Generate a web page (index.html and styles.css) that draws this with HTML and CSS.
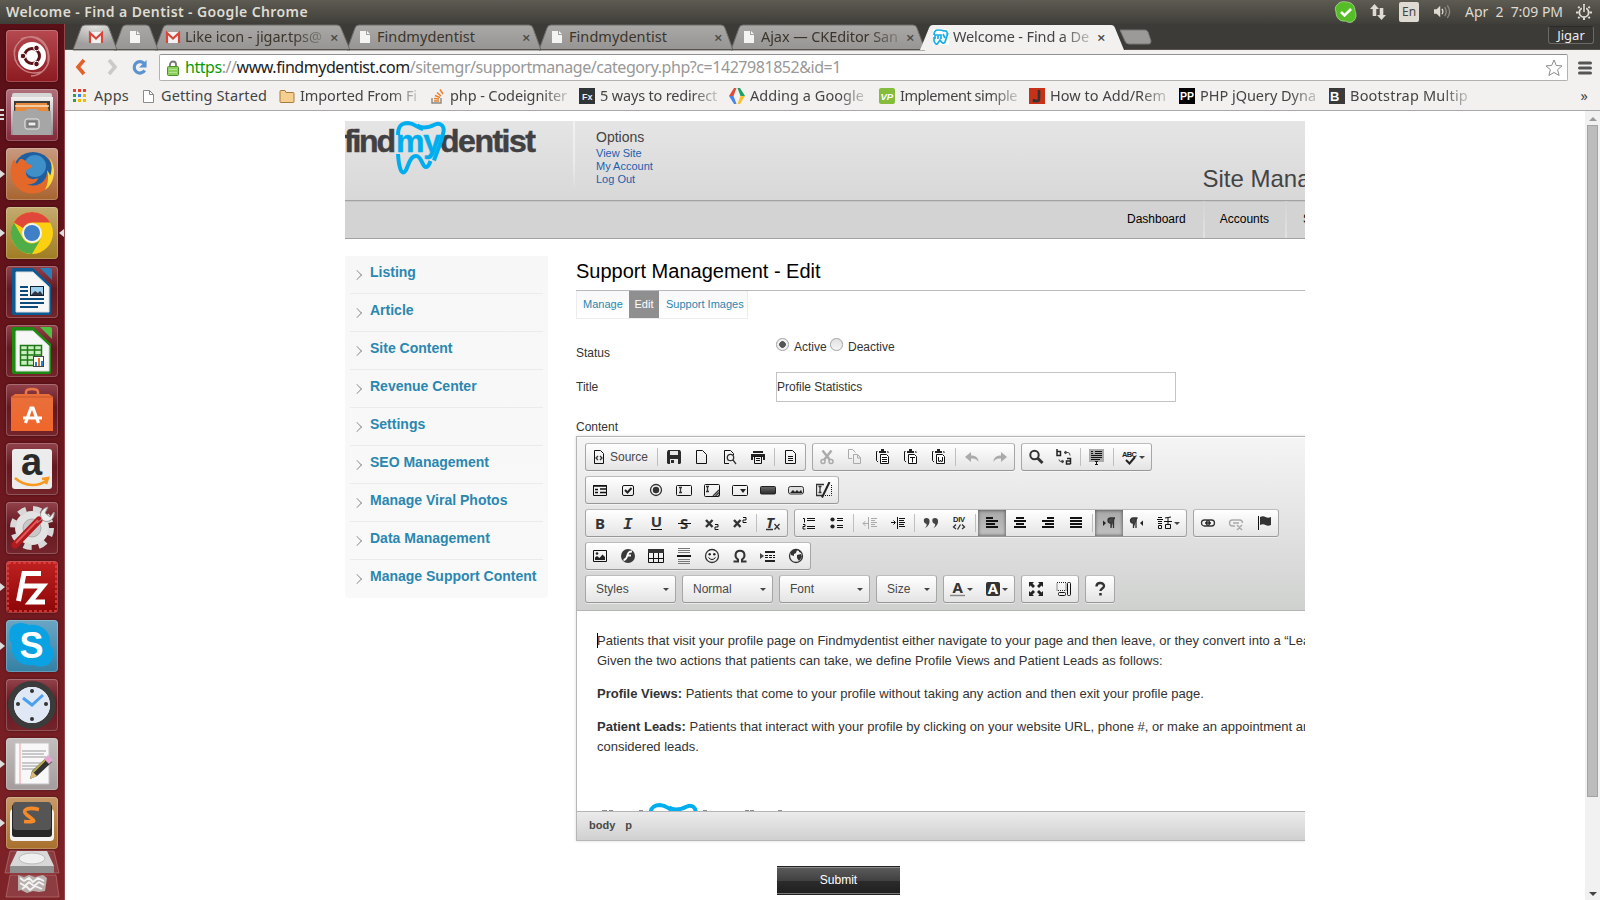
FILE: index.html
```html
<!DOCTYPE html>
<html lang="en">
<head>
<meta charset="utf-8">
<title>Welcome - Find a Dentist</title>
<link rel="stylesheet" href="styles.css">
</head>
<body>
<svg class="defs" aria-hidden="true">
<defs>
<linearGradient id="tabg" x1="0" y1="0" x2="0" y2="1"><stop offset="0" stop-color="#a9a8a6"/><stop offset="1" stop-color="#969593"/></linearGradient>
<radialGradient id="tabhot" cx=".5" cy="0" r=".8"><stop offset="0" stop-color="#e4e4e2"/><stop offset="1" stop-color="#a09f9d"/></radialGradient>
<linearGradient id="drk" x1="0" y1="0" x2="0" y2="1"><stop offset="0" stop-color="#6a6a6a"/><stop offset="1" stop-color="#2a2a2a"/></linearGradient>
<linearGradient id="bag" x1="0" y1="0" x2="0" y2="1"><stop offset="0" stop-color="#e8703c"/><stop offset="1" stop-color="#f0662a"/></linearGradient>
<linearGradient id="silver" x1="0" y1="0" x2="0" y2="1"><stop offset="0" stop-color="#f0f0f0"/><stop offset="1" stop-color="#8f8f8f"/></linearGradient>
</defs>
</svg>
<svg class="symbols" aria-hidden="true">
<symbol id="page" viewBox="0 0 16 16"><path d="M3.500 2.500h6l4 4v8h-10z" fill="#fff" stroke="#8a8a8a"/><path d="M9.500 2.500v4h4" fill="none" stroke="#8a8a8a"/></symbol>
<symbol id="tabpage" viewBox="0 0 16 16"><path d="M3 2h6v4h4v8H3z" fill="#f4f4f3"/><path d="M10 2l3 3h-3z" fill="#f4f4f3"/></symbol>
<symbol id="gmail" viewBox="0 0 16 16"><path d="M1 3h14v11H1z" fill="#f2f2f2"/><path d="M2 14V4l6 5.500L14 4v10" fill="none" stroke="#d8453a" stroke-width="2.200"/></symbol>
<symbol id="i-source" viewBox="0 0 16 16"><path d="M3.500 1.500h6l3 3v10h-9z" class="k"/><path d="M7 7L5 9l2 2M9 7l2 2-2 2" class="k k2"/></symbol>
<symbol id="i-save" viewBox="0 0 16 16"><path d="M1 3l1-2h12l1 2v11l-1 1H2l-1-1z" fill="#2b2b2b"/><path d="M4 2h8v4H4zM4 10h8v5H4z" fill="#e8e8e8"/><path d="M5 11h3v3H5z" fill="#2b2b2b"/></symbol>
<symbol id="i-new" viewBox="0 0 16 16"><path d="M2.500 1.500h6l4 4v9h-10z" class="k"/></symbol>
<symbol id="i-preview" viewBox="0 0 16 16"><path d="M11.500 6V4.500l-3-3h-6v13H7" class="k"/><circle cx="8.500" cy="8.500" r="3.200" class="k k2"/><path d="M11 11l3 4" class="k k2"/></symbol>
<symbol id="i-print" viewBox="0 0 16 16"><path d="M3 2h10v2H3zM1 5h14v6h-2V8H3v3H1z" fill="#222"/><path d="M4.500 7.500h7v7h-7z" class="k"/><path d="M6 9.500h4M6 11.500h4" class="k"/></symbol>
<symbol id="i-templates" viewBox="0 0 16 16"><path d="M2.500 1.500h7l3 3v10h-10zM5 7.500h5M5 9.500h5M5 11.500h5" class="k"/></symbol>
<symbol id="i-cut" viewBox="0 0 16 16"><path d="M3.500 1.500L11 11M12.500 1.500L5 11" stroke="#aaa" stroke-width="2.400"/><circle cx="4" cy="12.500" r="2" fill="none" stroke="#aaa" stroke-width="1.500"/><circle cx="12" cy="12.500" r="2" fill="none" stroke="#aaa" stroke-width="1.500"/></symbol>
<symbol id="i-copy" viewBox="0 0 16 16"><path d="M5 9.500H1.500v-9h4l3 3M6.500 5.500h4l3 3v6h-7zM10.500 6v3h3" fill="none" stroke="#aaa"/></symbol>
<symbol id="i-clip" viewBox="0 0 16 16"><path d="M2.500 2.500h-1v9l1.500 1.500M12.500 2.500h.5V4" class="k"/><path d="M4 2h2V0h3v2h2v2H4z" fill="#222"/><path d="M5.500 5.500h6l2 2v7h-8z" fill="#fff" stroke="#111"/></symbol>
<symbol id="i-paste" viewBox="0 0 16 16"><use href="#i-clip"/><path d="M7 8.500h5M7 10.500h5M7 12.500h5" class="k"/></symbol>
<symbol id="i-pastet" viewBox="0 0 16 16"><use href="#i-clip"/><path d="M7 8.500h5M9.500 8.500v5" class="k"/></symbol>
<symbol id="i-pastew" viewBox="0 0 16 16"><use href="#i-clip"/><path d="M7.500 8v4l1 1 1-2 1 2 1-1V8" class="k"/></symbol>
<symbol id="i-undo" viewBox="0 0 16 16"><path d="M7 3L1 8l6 5v-3.500c4-.5 6 1 7.500 3.500C14.500 9 12 6.500 7 6.500z" fill="#aaa"/></symbol>
<symbol id="i-find" viewBox="0 0 16 16"><circle cx="6.500" cy="6" r="4.200" fill="none" stroke="#333" stroke-width="2"/><path d="M9.500 9l5 5" stroke="#333" stroke-width="3"/></symbol>
<symbol id="i-replace" viewBox="0 0 16 16"><path d="M1 0v6.500h3.500v-4H1M11 9.500h3.500V15M14.500 12h-4v3h4" fill="none" stroke="#222" stroke-width="1.500"/><path d="M8 3.500h4q2 0 2 3M8 3.500l2-1.500v3zM8 12.500H5q-2 0-2-2M8 12.500L6 11v3z" stroke="#444" fill="none"/></symbol>
<symbol id="i-selall" viewBox="0 0 16 16"><path d="M0 0h15v13H0z" fill="#aaa"/><path d="M2 2.500h2M6 2.500h7M2 4.500h2M6 4.500h7M2 6.500h11M2 8.500h11M2 10.500h9" stroke="#111"/><path d="M6 12.500h3M7.500 12.500v3.500M6 15.500h3" class="k"/></symbol>
<symbol id="i-form" viewBox="0 0 16 16"><path d="M1.500 3.500h13v10h-13z" class="k"/><path d="M1 4h14M3 7.500h3M8 7h6M3 10.500h3M8 10.500h6" stroke="#111" stroke-width="1.600"/></symbol>
<symbol id="i-check" viewBox="0 0 16 16"><rect x="2.500" y="3.500" width="11" height="10" rx="1.500" class="k"/><path d="M5 8l2.500 2.500L11.500 6" fill="none" stroke="#222" stroke-width="2"/></symbol>
<symbol id="i-radio" viewBox="0 0 16 16"><circle cx="8" cy="8" r="5.500" class="k k2"/><circle cx="8" cy="8" r="3.200" fill="#333"/></symbol>
<symbol id="i-field" viewBox="0 0 16 16"><rect x=".5" y="3.500" width="15" height="10" rx="1" class="k"/><path d="M3 5.500h3M4.500 5.500v5M3 10.500h3" class="k k2"/></symbol>
<symbol id="i-area" viewBox="0 0 16 16"><rect x=".5" y="2.500" width="15" height="12" rx="1" class="k"/><path d="M2 4.500h3M3.500 4.500v5M2 9.500h3M9 14l6-6M11.500 14l3.500-3.500M14 14l1-1" class="k k2"/></symbol>
<symbol id="i-select" viewBox="0 0 16 16"><rect x=".5" y="3.500" width="15" height="10" rx="1" class="k"/><path d="M8 7h6l-3 4z" fill="#222"/></symbol>
<symbol id="i-button" viewBox="0 0 16 16"><rect x=".5" y="4.500" width="15" height="7.500" rx="1" fill="url(#drk)" stroke="#222"/></symbol>
<symbol id="i-imgbtn" viewBox="0 0 16 16"><rect x=".5" y="4.500" width="15" height="7.500" rx="2" fill="#ddd" stroke="#333"/><path d="M2 11l3-3 2 2 2-2 2 2 2-2 1.500 3z" fill="#222"/></symbol>
<symbol id="i-hidden" viewBox="0 0 16 16"><path d="M8 2.500H.5v11H6M2.500 4.500h3M4 4.500v6M2.500 10.500h3" class="k k2"/><path d="M15.500 3v10.500H9" fill="none" stroke="#111" stroke-dasharray="1 1"/><path d="M13.500 0L6 15.500" stroke="#222" stroke-width="2"/></symbol>
<symbol id="i-sub" viewBox="0 0 16 16"><path d="M2 5l6.500 7M8.500 5L2 12" stroke="#333" stroke-width="2.400"/><path d="M11 9.500h3v2.500h-3v2.500h3.500" class="k"/></symbol>
<symbol id="i-sup" viewBox="0 0 16 16"><path d="M2 5l6.500 7M8.500 5L2 12" stroke="#333" stroke-width="2.400"/><path d="M11 2.500h3V5h-3v2.500h3.500" class="k"/></symbol>
<symbol id="i-ol" viewBox="0 0 16 16"><path d="M2 3.500h1.500v4M2 9.500h2v2H2v2.500h2.500M6 3.500h8M6 5.500h8M6 11.500h8M6 13.500h8" class="k"/></symbol>
<symbol id="i-ul" viewBox="0 0 16 16"><circle cx="3.500" cy="4.500" r="2.100" fill="#222"/><circle cx="3.500" cy="11.500" r="2.100" fill="#222"/><path d="M8 3.500h6M8 5.500h6M8 10.500h6M8 12.500h6" class="k"/></symbol>
<symbol id="i-out" viewBox="0 0 16 16"><path d="M6.500 2v12M9 3.500h6M9 5.500h4M9 7.500h6M9 9.500h4M9 11.500h6M1 8.500h5M3.500 6L1 8.500 3.500 11" fill="none" stroke="#aaa"/></symbol>
<symbol id="i-in" viewBox="0 0 16 16"><path d="M7.500 2v12M9 3.500h6M9 5.500h5M9 7.500h6M9 9.500h5M9 11.500h6M1 7.500h4M3.500 5.500l2 2-2 2" class="k"/></symbol>
<symbol id="i-quote" viewBox="0 0 16 16"><path d="M1 4q2.500-2 5 0c1.500 3 0 7-4 9 1.500-2 2-3 1.500-4Q0 8 1 4zM9.500 4q2.500-2 5 0c1.500 3 0 7-4 9 1.500-2 2-3 1.500-4Q8.500 8 9.500 4z" fill="#444"/></symbol>
<symbol id="i-left" viewBox="0 0 16 16"><path d="M2 3h7M2 6h12M2 9h9M2 12h12" stroke="#111" stroke-width="2"/></symbol>
<symbol id="i-center" viewBox="0 0 16 16"><path d="M4 3h8M2 6h12M4 9h8M2 12h12" stroke="#111" stroke-width="2"/></symbol>
<symbol id="i-right" viewBox="0 0 16 16"><path d="M7 3h7M2 6h12M5 9h9M2 12h12" stroke="#111" stroke-width="2"/></symbol>
<symbol id="i-just" viewBox="0 0 16 16"><path d="M2 3h12M2 6h12M2 9h12M2 12h12" stroke="#111" stroke-width="2"/></symbol>
<symbol id="i-ltr" viewBox="0 0 16 16"><path d="M2 5.500L5 8l-3 3z" fill="#222"/><path d="M14 3H9.500a2.500 2.500 0 0 0 0 5H10v5M12.500 3v10" fill="#444" stroke="#333" stroke-width="1.300"/></symbol>
<symbol id="i-rtl" viewBox="0 0 16 16"><path d="M14 5.500L11 8l3 3z" fill="#222"/><path d="M8.500 3H4a2.500 2.500 0 0 0 0 5h.5v5M7 3v10" fill="#444" stroke="#333" stroke-width="1.300"/></symbol>
<symbol id="i-lang" viewBox="0 0 16 16"><path d="M0 4.500h6M1 2.500h4M1 6.500h4M1 8.500h4M1.500 10.500h3v3h-3zM8 3l6-1M7 6.500h8M11 3v6M8.500 9.500h5v4h-5z" class="k"/></symbol>
<symbol id="i-link" viewBox="0 0 16 16"><rect x="1.500" y="5" width="8" height="6" rx="3" class="k k2"/><rect x="6.500" y="5" width="8" height="6" rx="3" class="k k2"/><path d="M5 8h6" stroke="#222" stroke-width="1.500"/></symbol>
<symbol id="i-unlink" viewBox="0 0 16 16"><g fill="none" stroke="#aaa" stroke-width="1.400"><path d="M7 11H4.500a3 3 0 0 1 0-6h3M7 5h4.500a3 3 0 0 1 3 3M5 8h6M9 10l5 5M14 10l-5 5"/></g></symbol>
<symbol id="i-flag" viewBox="0 0 16 16"><path d="M2.500 1v14" class="k"/><path d="M4 2q3-1.500 5.500 0t5.500 0v8q-3 1.500-5.500 0T4 10z" fill="#333"/></symbol>
<symbol id="i-image" viewBox="0 0 16 16"><path d="M1.500 2.500h13v11h-13z" class="k"/><circle cx="5" cy="5.500" r="1.300" fill="#222"/><path d="M3 12V9.500l2-1.500 2.500 2 3-3.500L13 9v3z" fill="#222"/></symbol>
<symbol id="i-flash" viewBox="0 0 16 16"><circle cx="8" cy="8" r="7" fill="#3a3a3a"/><path d="M12 3.500c-4 0-4 2-5 5-.6 2-1.500 3.500-3.500 3.500M7 7.500h4" fill="none" stroke="#fff" stroke-width="1.800"/></symbol>
<symbol id="i-table" viewBox="0 0 16 16"><path d="M.5 2.500h15v12H.5zM.5 10.500h15M5.500 5v9M10.500 5v9" class="k"/><path d="M0 1h16v4H0z" fill="#333"/></symbol>
<symbol id="i-hr" viewBox="0 0 16 16"><path d="M2 .5h12M2 2.500h12M2 4.500h12M2 11.500h12M2 13.500h12M2 15.500h12" stroke="#777"/><path d="M1 8h14" stroke="#111" stroke-width="2"/></symbol>
<symbol id="i-smile" viewBox="0 0 16 16"><circle cx="8" cy="8" r="6.500" class="k k2"/><circle cx="5.700" cy="6.300" r="1.200" fill="#222"/><circle cx="10.300" cy="6.300" r="1.200" fill="#222"/><path d="M4.500 9.500q3.500 4 7 0" class="k"/></symbol>
<symbol id="i-omega" viewBox="0 0 16 16"><path d="M1.500 13.500h4.500v-2C2 9 3 2.800 8 2.800s6 6.200 2 8.700v2h4.500" fill="none" stroke="#333" stroke-width="2"/></symbol>
<symbol id="i-pbreak" viewBox="0 0 16 16"><path d="M0 5l4 3-4 3z" fill="#444"/><path d="M5 4h10M5 13h10" stroke="#222" stroke-width="2"/><path d="M5 7.500h10M5 9.500h10" stroke="#111" stroke-dasharray="3 1"/></symbol>
<symbol id="i-globe" viewBox="0 0 16 16"><circle cx="8" cy="8" r="6.500" class="k k2"/><path d="M3 4q3-3 6-2L8 5 6 6v2L3 7zM9 7l4-1 1 3-3 4-2-3zM11 2l3 3-3-1z" fill="#333"/></symbol>
<symbol id="i-max" viewBox="0 0 16 16"><path d="M1 1h5L4.500 2.500 7 5 5 7 2.500 4.500 1 6zM15 1v5l-1.500-1.500L11 7 9 5l2.500-2.500L10 1zM1 15v-5l1.500 1.500L5 9l2 2-2.500 2.500L6 15zM15 15h-5l1.500-1.500L9 11l2-2 2.500 2.500L15 10z" fill="#222"/></symbol>
<symbol id="i-blocks" viewBox="0 0 16 16"><path d="M1 1.500h9v8H1z" fill="none" stroke="#222" stroke-dasharray="1 1"/><rect x="11.500" y="1.500" width="3" height="13" rx="1" class="k"/><rect x="2.500" y="11.500" width="7" height="3" rx="1" class="k"/></symbol>
<symbol id="i-help" viewBox="0 0 16 16"><path d="M4.500 5.500C4.500 1 12 1 12 5c0 2.500-3.500 2.500-3.500 5" fill="none" stroke="#333" stroke-width="2.400"/><path d="M7.200 12h2.600v2.500H7.200z" fill="#333"/></symbol>
<symbol id="tooth" viewBox="0 0 192 54"><g fill="none" stroke="#00aeef" stroke-width="4"><path d="M53 14C53 4 57 2 63 2c7 .3 9 5 15 6"/><path d="M72 4.500c5 3.500 12 2 18-1 5-2 9.500 1 8.500 7-1 8-6 19-9.500 29"/><path d="M53 33c.5 8 2 18.500 5 18.500 5 0 5-16.500 13-16.500 6 0 6 11 10 11 2 0 3.500-3 4.500-6"/></g></symbol>
</svg>

<header class="panel">
  <span class="ub win-title" data-w="302">Welcome - Find a Dentist - Google Chrome</span>
  <div class="tray">
    <svg class="t-skype" viewBox="0 0 22 22"><path d="M2 4C4 1 8 0 11 1c6 0 9 4 9 9 2 4 1 9-3 11-3 1-5 0-6-1-6 1-10-3-10-9C0 8 0 6 2 4z" fill="#55bd25" stroke="#b9e6a4" stroke-width=".7"/><path d="M6 11l3.500 3.500L16 8" fill="none" stroke="#fff" stroke-width="2.600"/></svg>
    <svg class="t-net" viewBox="0 0 18 18"><path d="M5.500 1L10 6H7.300v7H3.700V6H1zM12.500 17L8 12h2.700V5h3.600v7H17z" fill="#dfdbd2"/></svg>
    <span class="ub t-en">En</span>
    <svg class="t-vol" viewBox="0 0 20 18"><path d="M1 6h3l4-4v13l-4-4H1z" fill="#dfdbd2"/><path d="M10 5.500q2 3 0 6" fill="none" stroke="#dfdbd2" stroke-width="1.500"/><path d="M13 3.500q3.500 5 0 10M16 1.500q5 7 0 14" fill="none" stroke="#8c8a83" stroke-width="1.500"/></svg>
    <span class="ub t-date" data-w="98">Apr&nbsp; 2&nbsp; 7:09 PM</span>
    <svg class="t-gear" viewBox="0 0 18 18"><circle cx="9" cy="9.500" r="5.200" fill="none" stroke="#dfdbd2" stroke-width="2"/><path d="M9 0v2M2.500 3L4 4.500M15.500 3L14 4.500M0 9.500h3M15 9.500h3M2.500 16L4 14.500M15.500 16L14 14.500M9 15v3" stroke="#dfdbd2" stroke-width="2.200"/><path d="M9 3v6" stroke="#45443f" stroke-width="4.500"/><path d="M9 2v7" stroke="#dfdbd2" stroke-width="1.800"/></svg>
  </div>
</header>

<div class="desktop">
<nav class="launcher">
  <div class="tile ubuntu"><svg viewBox="0 0 52 52"><path d="M8 22c4-20 32-22 35 4 1 10-8 20-18 20M15 9c14-6 30 4 27 24M9 18c-4 18 12 28 26 24" fill="none" stroke="#c97f82" stroke-width="1.500"/><circle cx="26" cy="26" r="14" fill="#fff"/><circle cx="26" cy="26" r="7.500" fill="none" stroke="#5c1219" stroke-width="3"/><g fill="#5c1219" stroke="#fff"><circle cx="17" cy="26" r="2.800"/><circle cx="30.500" cy="18" r="2.800"/><circle cx="30.500" cy="34" r="2.800"/></g></svg></div>
  <div class="tile files run3"><svg viewBox="0 0 52 52"><rect x="6" y="4" width="40" height="42" rx="2" fill="#d6d6d6"/><path d="M5 8h42v38H5z" fill="url(#silver)"/><rect x="8" y="12" width="36" height="12" fill="#3b3b3b"/><path d="M10 14h31l2 9H9z" fill="#e88a3c"/><path d="M9 17h34" stroke="#fbe3c4" stroke-width="1.500"/><path d="M7 22h12l2-2h10l2 2h12v24H7z" fill="#a6a6a6"/><rect x="19" y="30" width="14" height="10" rx="2" fill="#8c8c8c" stroke="#ececec"/><rect x="22" y="33" width="8" height="4" fill="#eee" stroke="#666"/></svg></div>
  <div class="tile firefox run"><svg viewBox="0 0 52 52"><circle cx="27" cy="24" r="20" fill="#1f5f9f"/><circle cx="29" cy="18" r="11" fill="#3f8fc8"/><path d="M42 9c8 9 7 25-2 32-8 6-20 6-27 0C4 34 2 22 8 11l3 5 3-5c4 0 7 2 7 5l5 1c1 4-5 3-6 6-1 7 6 10 12 7-1 5-6 7-11 6 10 5 21-3 20-13 2 2 3 4 3 6 3-7 2-14-2-20z" fill="#e4682a"/><path d="M42 8c9 10 8 26-3 34 3-6 4-13 2-20 1 2 3 4 3 6 3-7 2-14-2-20z" fill="#ffd83d"/></svg></div>
  <div class="tile chrome run active"><svg viewBox="0 0 52 52"><circle cx="26" cy="26" r="21" fill="#fbd011"/><path d="M7.800 15.500A21 21 0 0 1 44.200 15.500H26A10.500 10.500 0 0 0 17 21z" fill="#e0483c"/><path d="M7.800 15.500A21 21 0 0 0 26 47l9-15.500a10.500 10.500 0 0 1-18 0z" fill="#4fae47"/><circle cx="26" cy="26" r="10" fill="#f4f4f4"/><circle cx="26" cy="26" r="8" fill="#3f7fc8"/></svg></div>
  <div class="tile plain"><svg viewBox="0 0 52 52"><path d="M7 2h20l18 17v28q0 2-2 2H8q-2 0-2-2V3z" fill="#0b5a94"/><path d="M10 6h17l16 15v25H10z" fill="#f7f7f7" stroke="#ddd"/><path d="M34 2h10q2 0 2 2v10z" fill="#2a7fb8"/><path d="M14 21h8M14 25h8M14 29h8M14 33h24M14 37h24M14 41h18" stroke="#0b4a7a" stroke-width="1.800"/><rect x="24.500" y="20.500" width="13" height="9" fill="#9fd0ee" stroke="#123"/><path d="M25 29l4-4 3 2 2-2 3 4z" fill="#334"/></svg></div>
  <div class="tile plain"><svg viewBox="0 0 52 52"><path d="M7 2h20l18 17v28q0 2-2 2H8q-2 0-2-2V3z" fill="#1d8a12"/><path d="M10 6h17l16 15v25H10z" fill="#f7f7f7" stroke="#ddd"/><path d="M34 2h10q2 0 2 2v10z" fill="#4fc03f"/><path d="M14.500 20.500h21v20h-21zM14.500 25h21M14.500 30h21M14.500 35h21M21.500 20v20M28.500 20v20" fill="#c9efc0" stroke="#1d7a12" stroke-width="1.500"/><rect x="27.500" y="31.500" width="10" height="10" fill="#fff" stroke="#444"/><path d="M29 37h2v4h-2z" fill="#2a7fd0"/><path d="M32 33h2v8h-2z" fill="#e8742a"/><path d="M35 36h2v5h-2z" fill="#2a7fd0"/></svg></div>
  <div class="tile plain"><svg viewBox="0 0 52 52"><path d="M20 18V8q0-3 6-3t6 3v10" fill="none" stroke="#e9774a" stroke-width="2.500"/><path d="M5 13l4-3h34l4 3v34H5z" fill="url(#bag)"/><path d="M5 13h42" stroke="#c9552a"/><path d="M19.500 39l5.500-15h2l5.500 15M17 34h19" fill="none" stroke="#fff" stroke-width="3.200"/></svg></div>
  <div class="tile plain"><svg viewBox="0 0 52 52"><rect x="6" y="6" width="40" height="40" rx="3" fill="#ececec"/><text x="15" y="32" class="amz">a</text><path d="M9 35c10 9 24 9 32 2M36 36l6-1-2 6" fill="none" stroke="#f79a1f" stroke-width="2.500"/></svg></div>
  <div class="tile plain"><svg viewBox="0 0 52 52"><circle cx="26" cy="26" r="17" fill="#e2e2e2"/><circle cx="26" cy="26" r="19" fill="none" stroke="#d8d8d8" stroke-width="6" stroke-dasharray="8 7"/><circle cx="26" cy="26" r="9" fill="#c8c8c8" stroke="#aaa"/><path d="M9 43l24-25" stroke="#b3191d" stroke-width="7" stroke-linecap="round"/><path d="M10 41l22-23" stroke="#e0585a" stroke-width="2"/><path d="M31 21l5-4M36 17c-4-6 1-11 6-12l-3 6 5 4 4-5c1 6-4 11-10 9z" fill="#eee" stroke="#999"/></svg></div>
  <div class="tile fz run"><svg viewBox="0 0 52 52"><rect x="2" y="2" width="48" height="48" fill="none" stroke="#d44" stroke-width="1.500" stroke-dasharray="3 2"/><path d="M12.500 40L18 12.500h17M15 25h13M24 25h13L24 41h15" fill="none" stroke="#fff" stroke-width="5"/></svg></div>
  <div class="tile sky run"><svg viewBox="0 0 52 52"><path d="M5 7c6-6 14-4 18-2 14-2 23 9 21 20 5 5 4 12 1 17-5 6-13 5-17 3-14 2-24-8-22-20-3-5-4-12-1-18z" fill="#0ba2e3"/><text x="13.500" y="38" class="sk">S</text></svg></div>
  <div class="tile plain"><svg viewBox="0 0 52 52"><circle cx="26" cy="26" r="21" fill="#fbfdff" stroke="#3b3b3b" stroke-width="6"/><circle cx="26" cy="26" r="18" fill="#dfe8f4"/><path d="M17 19l9 7 11-10" fill="none" stroke="#4a9ff0" stroke-width="3"/><g fill="#333"><circle cx="26" cy="12" r="2"/><circle cx="26" cy="40" r="2"/><circle cx="12" cy="25" r="2"/><circle cx="40" cy="25" r="2"/></g></svg></div>
  <div class="tile edit run"><svg viewBox="0 0 52 52"><path d="M9 5h34v41H9z" fill="#f8f8f8" stroke="#c4c4c4"/><path d="M14 5v41" stroke="#e8a0a0"/><path d="M16 13h24M16 16h22M16 19h24M16 25h20M16 28h18M16 31h22" stroke="#999"/><path d="M24 41l2-8 15-14 5 5-15 14z" fill="#333"/><path d="M24 41l2-8 5 5z" fill="#d9b878"/><path d="M38 21l4-4 5 5-4 4z" fill="#e6a6d2"/><path d="M27 34l12-12" stroke="#b8b050" stroke-width="2"/></svg></div>
  <div class="tile subl run"><svg viewBox="0 0 52 52"><rect x="4" y="12" width="44" height="32" rx="4" fill="#f3f3f3"/><rect x="6" y="7" width="40" height="33" rx="3" fill="#262626"/><rect x="7" y="5" width="38" height="28" rx="3" fill="#555"/><path d="M33 12.500c-12-3-18 1-12 5.500s13 8-3 6.500" fill="none" stroke="#f58a2a" stroke-width="3.600"/></svg></div>
  <div class="trash"><svg viewBox="0 0 56 50"><path d="M6 1h44l5 22H1zM6 25h46l3 22H2z" fill="#fff" fill-opacity=".12" stroke="#c98a8a" stroke-opacity=".5"/><path d="M13 1h30l7 15H6z" fill="#d8d8d8"/><path d="M6 16h44v7H6z" fill="#8f8f8f"/><ellipse cx="28" cy="8.500" rx="13" ry="5.500" fill="#f0f0f0" stroke="#bbb"/><path d="M14 25l6 2 5-2 6 2 8-2 4 3-2 13-6 1-6-1-6 2-6-3-3 1z" fill="#b9b0ae"/><path d="M16 28l4 3 5-3 4 4 5-4 6 3M16 33l5 3 4-4 5 4 5-4 5 3M18 39l4-3 4 4 5-4 7 3" stroke="#f4f4f4" stroke-width="1.800" fill="none"/></svg></div>
</nav>

<main class="browser">
  <div class="tabs">
    <svg class="tabs-bg" viewBox="0 0 1535 26">
      <g stroke="#6d6c69"><path d="M666 26L674 4q1-3 4-3h170q3 0 4 3l8 22z" fill="url(#tabg)"/><path d="M474 26l8-22q1-3 4-3h170q3 0 4 3l8 22z" fill="url(#tabg)"/><path d="M282 26l8-22q1-3 4-3h170q3 0 4 3l8 22z" fill="url(#tabg)"/><path d="M90 26l8-22q1-3 4-3h170q3 0 4 3l9 22z" fill="url(#tabg)"/><path d="M49 26l8-22q1-3 4-3h20q3 0 4 3l8 22z" fill="url(#tabg)"/><path d="M8 26l8-22q1-3 4-3h20q3 0 4 3l8 22z" fill="url(#tabhot)"/></g>
      <path d="M0 25.500h855M1060 25.500h475" stroke="#55544f"/>
      <path d="M855 26l9-22q1-3 4-3h178q3 0 4 3l9 22z" fill="#f2f1f0"/>
      <path d="M1055 6h25q2 0 3 2l3 9q0 3-2 3h-20q-3 0-4-3z" fill="#9b9a98" stroke="#777"/>
    </svg>
    <div class="tabrow">
      <span class="tab t1"><svg><use href="#gmail"/></svg></span>
      <span class="tab t2"><svg><use href="#tabpage"/></svg></span>
      <span class="tab"><svg><use href="#gmail"/></svg><span class="ub tt fade" data-w="137">Like icon - jigar.tps@</span><b>×</b></span>
      <span class="tab"><svg><use href="#tabpage"/></svg><span class="ub tt" data-w="98">Findmydentist</span><b>×</b></span>
      <span class="tab"><svg><use href="#tabpage"/></svg><span class="ub tt" data-w="98">Findmydentist</span><b>×</b></span>
      <span class="tab"><svg><use href="#tabpage"/></svg><span class="ub tt fade" data-w="137">Ajax — CKEditor San</span><b>×</b></span>
      <span class="tab cur"><svg viewBox="0 0 16 16"><path d="M0 0h16v16H0z" fill="#fff"/><path d="M1 6Q1 1 5 1t6 1q4-1 3 4M1 8v4q2 5 4 2l2-3q3 5 5 2l3-9M2 10V6h3v4M5 6h3v4M10 5l2 4" fill="none" stroke="#19aee8" stroke-width="1.700"/></svg><span class="ub tt fade" data-w="136">Welcome - Find a De</span><b>×</b></span>
    </div>
    <span class="ub profile">Jigar</span>
  </div>
  <div class="toolbar">
    <svg class="nav-b" viewBox="0 0 14 18"><path d="M10 2L4 9l6 7" fill="none" stroke="#e2602a" stroke-width="3.600"/></svg>
    <svg class="nav-f" viewBox="0 0 14 18"><path d="M4 2l6 7-6 7" fill="none" stroke="#cbcac8" stroke-width="3.600"/></svg>
    <svg class="nav-r" viewBox="0 0 18 18"><path d="M13.500 4.500A6 6 0 1 0 14.500 12" fill="none" stroke="#5b93d0" stroke-width="3.400"/><path d="M16.500 1v8h-8z" fill="#5b93d0"/></svg>
    <div class="omni">
      <svg class="lock" viewBox="0 0 12 16"><path d="M3 7V4.500a3 3 0 0 1 6 0V7" fill="none" stroke="#777" stroke-width="1.800"/><rect x=".5" y="6.500" width="11" height="9" rx="1" fill="#8ccf5c" stroke="#4f8f2c"/><path d="M2 9.500h8M2 12.500h8" stroke="#b5e394"/></svg>
      <span class="ub url" data-w="656"><i class="g">https</i><i>://</i><i class="d">www.findmydentist.com</i><i>/sitemgr/supportmanage/category.php?c=1427981852&amp;id=1</i></span>
      <svg class="star" viewBox="0 0 18 18"><path d="M9 1l2.300 5.500 5.700.4-4.400 3.800 1.500 5.800L9 13.500l-5.100 3 1.500-5.800L1 6.900l5.700-.4z" fill="#fff" stroke="#8b8b8b"/></svg>
    </div>
    <svg class="menu" viewBox="0 0 14 14"><path d="M1.500 2h11M1.500 7h11M1.500 12h11" stroke="#555" stroke-width="3" stroke-linecap="round"/></svg>
  </div>
  <div class="bookmarks">
    <a class="bm apps"><svg viewBox="0 0 16 16"><g><path d="M1 1h3v3H1zM6 1h3v3H6zM11 1h3v3h-3z" fill="#e8402f"/><path d="M1 6h3v3H1z" fill="#2ea04a"/><path d="M6 6h3v3H6z" fill="#3f7fe8"/><path d="M11 6h3v3h-3z" fill="#f5b800"/><path d="M1 11h3v3H1z" fill="#2ea04a"/><path d="M6 11h3v3H6zM11 11h3v3h-3z" fill="#f5b800"/></g></svg><span class="ub" data-w="35">Apps</span></a>
    <a class="bm gs"><svg><use href="#page"/></svg><span class="ub" data-w="106">Getting Started</span></a>
    <a class="bm"><svg viewBox="0 0 16 16"><path d="M1 3.500q0-1 1-1h4l1 2h7q1 0 1 1v8q0 1-1 1H2q-1 0-1-1z" fill="#f6cf8e" stroke="#a57c3a"/></svg><span class="ub fade" data-w="117">Imported From Fi</span></a>
    <a class="bm"><svg viewBox="0 0 16 16"><path d="M3 10v5h9v-5" fill="none" stroke="#888" stroke-width="1.400"/><path d="M5 13h5M5 10.500l5 .6M6 7.500l5 2M8 4.500l4 3.500M11 1.500l3 4.500" stroke="#e8802a" stroke-width="1.500"/></svg><span class="ub fade" data-w="117">php - Codeigniter</span></a>
    <a class="bm"><svg viewBox="0 0 16 16"><path d="M0 0h16v16H0z" fill="#2f3436"/><text x="3" y="11.500" class="fx">Fx</text></svg><span class="ub fade" data-w="117">5 ways to redirect</span></a>
    <a class="bm"><svg viewBox="0 0 16 16"><path d="M0 8l5-8h2.500L4.500 8z" fill="#de4b38"/><path d="M0 8l5 8h2.500L4.500 8z" fill="#4a86e8"/><path d="M16 8l-5-8H8.500l3 8z" fill="#1aa260"/><path d="M16 8l-5 8H8.500l3-8z" fill="#fbc02d"/></svg><span class="ub fade" data-w="114">Adding a Google</span></a>
    <a class="bm"><svg viewBox="0 0 16 16"><rect width="16" height="16" rx="2" fill="#84bd3c"/><text x="1.500" y="11.500" class="vp">VP</text></svg><span class="ub fade" data-w="117">Implement simple</span></a>
    <a class="bm"><svg viewBox="0 0 16 16"><path d="M0 0h16v16H0z" fill="#c53218"/><path d="M10 2v9q0 2-2 2H5v-2" fill="none" stroke="#333" stroke-width="2.600"/></svg><span class="ub fade" data-w="116">How to Add/Rem</span></a>
    <a class="bm"><svg viewBox="0 0 16 16"><path d="M0 0h16v16H0z" fill="#000"/><text x="1" y="12" class="pp">PP</text></svg><span class="ub fade" data-w="116">PHP jQuery Dyna</span></a>
    <a class="bm"><svg viewBox="0 0 16 16"><path d="M0 0h16v16H0z" fill="#3a3a3a"/><text x="1" y="13" class="bs">B</text></svg><span class="ub fade" data-w="118">Bootstrap Multip</span></a>
    <span class="ub more">»</span>
  </div>

  <div class="view">
    <div class="page">
      <div class="head">
        <svg class="logo" viewBox="0 0 192 54"><text class="logo-t" x="-1" y="31" textLength="52">find</text><text class="logo-t logo-my" x="51" y="31" textLength="45">my</text><text class="logo-t" x="95" y="31" textLength="96">dentist</text><use href="#tooth"/></svg>
        <div class="opts"><h4>Options</h4><a>View Site</a><a>My Account</a><a>Log Out</a></div>
        <div class="sm">Site Manager</div>
      </div>
      <div class="topnav"><a>Dashboard</a><a>Accounts</a><a>Support</a></div>
      <div class="cols">
        <ul class="side">
          <li>Listing</li><li>Article</li><li>Site Content</li><li>Revenue Center</li><li>Settings</li><li>SEO Management</li><li>Manage Viral Photos</li><li>Data Management</li><li>Manage Support Content</li>
        </ul>
        <section class="main">
          <h1>Support Management - Edit</h1>
          <div class="sub"><a>Manage</a><a class="on">Edit</a><a>Support Images</a></div>
          <div class="row status"><label>Status</label><span class="rd on"></span><span class="o1">Active</span><span class="rd"></span><span class="o2">Deactive</span></div>
          <div class="row title"><label>Title</label><div class="inp">Profile Statistics</div></div>
          <div class="clabel">Content</div>
          <div class="editor">
            <div class="tb">
              <div class="tr">
                <div class="grp"><a class="btn src"><svg><use href="#i-source"/></svg>Source</a><s></s><a class="btn"><svg><use href="#i-save"/></svg></a><a class="btn"><svg><use href="#i-new"/></svg></a><a class="btn"><svg><use href="#i-preview"/></svg></a><a class="btn"><svg><use href="#i-print"/></svg></a><s></s><a class="btn"><svg><use href="#i-templates"/></svg></a></div>
                <div class="grp"><a class="btn"><svg><use href="#i-cut"/></svg></a><a class="btn"><svg><use href="#i-copy"/></svg></a><a class="btn"><svg><use href="#i-paste"/></svg></a><a class="btn"><svg><use href="#i-pastet"/></svg></a><a class="btn"><svg><use href="#i-pastew"/></svg></a><s></s><a class="btn"><svg><use href="#i-undo"/></svg></a><a class="btn flip"><svg><use href="#i-undo"/></svg></a></div>
                <div class="grp"><a class="btn"><svg><use href="#i-find"/></svg></a><a class="btn"><svg><use href="#i-replace"/></svg></a><s></s><a class="btn"><svg><use href="#i-selall"/></svg></a><s></s><a class="btn dd"><svg viewBox="0 0 16 16"><text x="0" y="7.500" class="pix" textLength="15">ABC</text><path d="M4 11l3.500 3.500L13 8" fill="none" stroke="#222" stroke-width="2"/></svg></a></div>
              </div>
              <div class="tr">
                <div class="grp"><a class="btn"><svg><use href="#i-form"/></svg></a><a class="btn"><svg><use href="#i-check"/></svg></a><a class="btn"><svg><use href="#i-radio"/></svg></a><a class="btn"><svg><use href="#i-field"/></svg></a><a class="btn"><svg><use href="#i-area"/></svg></a><a class="btn"><svg><use href="#i-select"/></svg></a><a class="btn"><svg><use href="#i-button"/></svg></a><a class="btn"><svg><use href="#i-imgbtn"/></svg></a><a class="btn"><svg><use href="#i-hidden"/></svg></a></div>
              </div>
              <div class="tr">
                <div class="grp"><a class="btn"><svg viewBox="0 0 16 16"><text x="3" y="13.500" class="gl" textLength="11">B</text></svg></a><a class="btn"><svg viewBox="0 0 16 16"><text x="3" y="13.500" class="gl it">I</text></svg></a><a class="btn"><svg viewBox="0 0 16 16"><text x="2.800" y="12" class="gl">U</text><path d="M3 14.500h11" class="k"/></svg></a><a class="btn"><svg viewBox="0 0 16 16"><text x="4" y="13.500" class="gl">S</text><path d="M2 8.500h13" class="k"/></svg></a><a class="btn"><svg><use href="#i-sub"/></svg></a><a class="btn"><svg><use href="#i-sup"/></svg></a><s></s><a class="btn"><svg viewBox="0 0 16 16"><text x="1" y="12.500" class="gl gi">T</text><path d="M1 14.500h7M9.500 9l5 5.500M14.500 9l-5 5.500" class="k k2"/></svg></a></div>
                <div class="grp"><a class="btn"><svg><use href="#i-ol"/></svg></a><a class="btn"><svg><use href="#i-ul"/></svg></a><s></s><a class="btn"><svg><use href="#i-out"/></svg></a><a class="btn"><svg><use href="#i-in"/></svg></a><s></s><a class="btn"><svg><use href="#i-quote"/></svg></a><a class="btn"><svg viewBox="0 0 16 16"><text x="2" y="7" class="pix" textLength="12">DIV</text><path d="M5 9.500L2.500 12 5 14M11 9.500l2.500 2.500-2.500 2M9.500 9.500L6.500 14.500" class="k k2"/></svg></a><s></s><a class="btn down"><svg><use href="#i-left"/></svg></a><a class="btn"><svg><use href="#i-center"/></svg></a><a class="btn"><svg><use href="#i-right"/></svg></a><a class="btn"><svg><use href="#i-just"/></svg></a><s></s><a class="btn down"><svg><use href="#i-ltr"/></svg></a><a class="btn"><svg><use href="#i-rtl"/></svg></a><a class="btn dd"><svg><use href="#i-lang"/></svg></a></div>
                <div class="grp"><a class="btn"><svg><use href="#i-link"/></svg></a><a class="btn"><svg><use href="#i-unlink"/></svg></a><a class="btn"><svg><use href="#i-flag"/></svg></a></div>
              </div>
              <div class="tr">
                <div class="grp"><a class="btn"><svg><use href="#i-image"/></svg></a><a class="btn"><svg><use href="#i-flash"/></svg></a><a class="btn"><svg><use href="#i-table"/></svg></a><a class="btn"><svg><use href="#i-hr"/></svg></a><a class="btn"><svg><use href="#i-smile"/></svg></a><a class="btn"><svg><use href="#i-omega"/></svg></a><a class="btn"><svg><use href="#i-pbreak"/></svg></a><a class="btn"><svg><use href="#i-globe"/></svg></a></div>
              </div>
              <div class="tr">
                <div class="grp combo">Styles</div><div class="grp combo">Normal</div><div class="grp combo">Font</div><div class="grp combo small">Size</div>
                <div class="grp"><a class="btn dd"><svg viewBox="0 0 16 16"><text x="2.500" y="12" class="gl">A</text><path d="M0 14.500h15" stroke="#888" stroke-width="1.500"/></svg></a><a class="btn dd"><svg viewBox="0 0 16 16"><rect x="1" y="1" width="14" height="14" rx="2" fill="#333"/><text x="2.800" y="13" class="gl wh">A</text></svg></a></div>
                <div class="grp"><a class="btn"><svg><use href="#i-max"/></svg></a><a class="btn"><svg><use href="#i-blocks"/></svg></a></div>
                <div class="grp"><a class="btn"><svg><use href="#i-help"/></svg></a></div>
              </div>
            </div>
            <div class="doc">
              <p class="caret">Patients that visit your profile page on Findmydentist either navigate to your page and then leave, or they convert into a “Lead”.<br>Given the two actions that patients can take, we define Profile Views and Patient Leads as follows:</p>
              <p><b>Profile Views:</b> Patients that come to your profile without taking any action and then exit your profile page.</p>
              <p><b>Patient Leads:</b> Patients that interact with your profile by clicking on your website URL, phone #, or make an appointment are<br>considered leads.</p>
              <svg class="logo pic" viewBox="0 0 192 54"><path d="M5 7.500h5M12 7.500h4M42 7.500h4M106 7.500h4M148 7.500h4M153 7.500h4M181 7.500h4" stroke="#8c8c8c"/><use href="#tooth"/></svg>
            </div>
            <div class="path"><span>body</span><span>p</span></div>
          </div>
          <div class="submit">Submit</div>
        </section>
      </div>
    </div>
    <div class="scroll"><i class="up"></i><div class="thumb"></div><i class="dn"></i></div>
  </div>
</main>
</div>
<script src="app.js"></script>
</body>
</html>
```

FILE: styles.css
```css
* { box-sizing: border-box; }
body { margin: 0; width: 1600px; height: 900px; overflow: hidden; background: #fff; font-family: "Liberation Sans", Arial, sans-serif; font-size: 12px; color: #333; display: flex; flex-direction: column; }
svg { display: block; flex: none; overflow: visible; }
.defs { position: absolute; width: 0; height: 0; }
.symbols { display: none; }
.ub { font-family: "Noto Sans", "Open Sans", sans-serif; white-space: nowrap; }

.panel { height: 24px; flex: none; background: linear-gradient(#5d5b52, #3f3e39); display: flex; justify-content: space-between; align-items: center; padding: 0 8px 0 6px; }
.win-title { color: #dfdbd2; font-weight: 600; font-size: 14px; line-height: 24px; }
.tray { display: flex; align-items: center; height: 24px; color: #dfdbd2; }
.t-skype { width: 22px; height: 22px; }
.t-net { width: 18px; height: 18px; margin-left: 12px; }
.t-en { width: 20px; height: 20px; margin-left: 12px; background: #dfdbd2; color: #45443f; border-radius: 2px; font-size: 12px; line-height: 20px; text-align: center; }
.t-vol { width: 20px; height: 16px; margin-left: 13px; }
.t-date { margin-left: 13px; width: 98px; font-size: 14px; line-height: 22px; padding-bottom: 1px; }
.t-gear { width: 16px; height: 16px; margin-left: 13px; }

.desktop { display: flex; height: 876px; }
.launcher { width: 65px; flex: none; background: linear-gradient(#5a0f17, #67151c 40%, #7e2327); border-right: 1px solid #94474b; padding: 6px 0 0 6px; display: flex; flex-direction: column; gap: 7px; }
.tile { width: 52px; height: 52px; border-radius: 4px; flex: none; position: relative; box-shadow: inset 0 0 0 1px rgba(255,255,255,.22), 0 0 3px rgba(0,0,0,.4); }
.tile svg { width: 52px; height: 52px; }
.tile.ubuntu { background: linear-gradient(#b54a50, #8c1a20); }
.tile.files { background: linear-gradient(#b0707c, #84283a); }
.tile.firefox { background: linear-gradient(#c89a80, #a8642f); }
.tile.chrome { background: linear-gradient(#c4ac70, #a07c22); }
.tile.plain { background: linear-gradient(#92424a, #641820 45%, #74242b); }
.tile.fz { background: linear-gradient(#c02020, #8c0606); }
.tile.sky { background: linear-gradient(#6aa6c4, #3580a4); }
.tile.edit { background: linear-gradient(#c4bebe, #a49c9c); }
.tile.subl { background: linear-gradient(#c89a68, #a8702c); }
.run::before { content: ""; position: absolute; left: -6px; top: 22px; border: 4px solid transparent; border-left: 5px solid #ddd; border-right: 0; }
.run3::before { content: ""; position: absolute; left: -6px; top: 20px; width: 4px; height: 11px; background: repeating-linear-gradient(#ddd 0 2px, transparent 2px 4.500px); }
.active::after { content: ""; position: absolute; right: -6px; top: 22px; border: 4px solid transparent; border-right: 5px solid #ddd; border-left: 0; }
.trash { width: 56px; height: 50px; margin: -6px 0 0 -2px; flex: none; }
.trash svg { width: 56px; height: 50px; }

.browser { flex: 1; min-width: 0; display: flex; flex-direction: column; }
.tabs { height: 26px; background: #3c3b37; position: relative; flex: none; display: flex; justify-content: space-between; }
.tabs-bg { position: absolute; inset: 0; width: 1535px; height: 26px; }
.tabrow { display: flex; position: relative; }
.tab { width: 192px; display: flex; align-items: center; height: 25px; color: #3b352c; }
.tab svg { width: 16px; height: 16px; margin-right: 4px; }
.tab.t1 { width: 41px; margin-left: 23px; }
.tab.t2 { width: 36px; margin-left: -2px; }
.tab:not(.t1):not(.t2) { padding-left: 2px; }
.tab b { font: 600 15px "Noto Sans", sans-serif; color: #4a4a48; margin-left: auto; width: 25px; }
.tt { font-size: 14.500px; width: 138px; line-height: 25px; }
.tab.cur { width: 191px; color: #444; }
.profile { border: 1px solid #6b6a66; border-top-color: #2a2a28; border-radius: 3px; height: 18px; width: 46px; margin: 2px 6px 0 0; color: #eee; font-size: 13px; line-height: 16px; text-align: center; background: #373632; position: relative; }
.fade { -webkit-mask-image: linear-gradient(to right, #000 78%, rgba(0,0,0,.25) 100%); mask-image: linear-gradient(to right, #000 78%, rgba(0,0,0,.25) 100%); }

.toolbar { height: 34px; background: #f2f1f0; display: flex; align-items: center; flex: none; }
.nav-b { width: 14px; height: 18px; margin-left: 9px; }
.nav-f { width: 14px; height: 18px; margin-left: 17px; }
.nav-r { width: 17px; height: 17px; margin-left: 12px; }
.omni { width: 1409px; height: 27px; margin: 1px 0 0 11px; border: 1px solid #b3b2b1; border-top: 1px solid #929191; border-radius: 2px; background: #fff; display: flex; align-items: center; padding-left: 7px; }
.omni .lock { width: 12px; height: 16px; margin-right: 6px; }
.url { font-size: 16px; color: #989898; line-height: 22px; padding-bottom: 1px; }
.url i { font-style: normal; }
.url .g { color: #0a9a0a; }
.url .d { color: #222; }
.star { width: 18px; height: 18px; margin: 0 4px 0 auto; }
.menu { width: 14px; height: 14px; margin: 1px 0 0 10px; }
.bookmarks { height: 27px; background: #f2f1f0; border-bottom: 1px solid #a9a9a9; display: flex; align-items: center; flex: none; color: #444; font-size: 14.500px; }
.bm { display: flex; align-items: center; width: 150px; height: 26px; padding-bottom: 3px; }
.bm svg { width: 16px; height: 16px; margin-right: 5px; }
.bm .ub { line-height: 20px; padding-bottom: 2px; }
.bm.apps { width: 68px; margin-left: 7px; }
.bm.apps svg { margin-right: 6px; }
.bm.gs { width: 139px; }
.more { margin: 0 12px 4px auto; }
.fx { font: bold 9px "Liberation Sans", sans-serif; fill: #eee; }
.vp { font: italic bold 9.500px "Liberation Sans", sans-serif; fill: #fff; }
.pp { font: bold 10.500px "Liberation Sans", sans-serif; fill: #fff; }
.bs { font: bold 13px "Liberation Sans", sans-serif; fill: #fff; }
.amz { font: bold 38px "Liberation Sans", sans-serif; fill: #2a2a2a; }
.sk { font: bold 36px "Liberation Sans", sans-serif; fill: #fff; }

.view { flex: 1; display: flex; justify-content: space-between; height: 789px; }
.page { width: 960px; margin: 10px 0 0 280px; overflow: hidden; height: 779px; }
.head { height: 80px; background: linear-gradient(#e5e5e5, #d8d8d8); border-bottom: 1px solid #a2a2a2; display: flex; }
.logo { width: 192px; height: 54px; }
.logo-t { font: bold 32px "Liberation Sans", sans-serif; fill: #414042; stroke: #414042; stroke-width: .5px; }
.logo-t.logo-my { fill: #00aeef; stroke: #00aeef; }
.opts { margin-left: 36px; padding-left: 21px; width: 300px; height: 66px; border-left: 2px solid; border-image: linear-gradient(#f2f2f2, #ececec 60%, #dcdcdc) 1; }
.opts h4 { font-weight: normal; font-size: 14px; line-height: 16px; margin: 8px 0 2px; color: #444; }
.opts a { display: block; font-size: 11px; line-height: 13px; color: #1d5eae; }
.sm { margin: 44px 0 0 auto; width: 102.500px; overflow: hidden; white-space: nowrap; font-size: 24px; line-height: 28px; color: #444; }
.topnav { height: 38px; background: #d3d3d3; border-bottom: 1px solid #a2a2a2; box-shadow: inset 0 1px #c6c6c6; display: flex; color: #000; padding-left: 766px; }
.topnav a { flex: none; padding: 11px 17px 0 16px; line-height: 14px; height: 37px; border-right: 2px solid; border-image: linear-gradient(#d3d3d3, #e2e2e2) 1; }
.topnav a:nth-child(2) { padding: 11px 16px 0 15px; }
.cols { display: flex; }
.side { list-style: none; margin: 17px 0 0; padding: 0 5px; width: 203px; height: 342px; background: linear-gradient(#f7f7f7, #f9f9f9); border-radius: 0 0 4px 4px; }
.side li { height: 38px; border-bottom: 1px solid #ebebeb; font-weight: bold; font-size: 14px; line-height: 32px; color: #2a87b0; padding-left: 20px; position: relative; white-space: nowrap; }
.side li:last-child { border: 0; }
.side li::before { content: ""; position: absolute; left: 3px; top: 15px; width: 7px; height: 7px; border: solid #999; border-width: 1px 1px 0 0; transform: rotate(45deg) scale(.9); }
.main { margin-left: 28px; width: 729px; flex: none; }
h1 { font-weight: normal; font-size: 20px; line-height: 24px; margin: 20px 0 0; height: 32px; border-bottom: 1px solid #b8b8c0; color: #000; }
.sub { display: flex; width: 172px; height: 28px; border: 1px solid #ececec; border-top: 0; font-size: 11px; line-height: 27px; color: #2a87b0; background: linear-gradient(#f8f8f8, #fff); white-space: nowrap; }
.sub a:first-child { width: 52px; padding-left: 6px; }
.sub .on { background: #8f8f8f; color: #fff; width: 30px; padding-left: 5.500px; }
.sub .on + a { padding-left: 7px; }
.row { display: flex; }
.row label { width: 200px; }
.status { height: 53px; padding-top: 18px; }
.status label { line-height: 32px; }
.rd { width: 12.500px; height: 12.500px; border-radius: 50%; border: 1px solid #a4a4a4; background: linear-gradient(#e2e2e2, #f4f4f4); margin-top: 1px; }
.rd.on { background: radial-gradient(#555 0 3px, #eee 3.600px); }
.o1, .o2 { line-height: 20px; margin-left: 5.500px; }
.o1 { width: 36px; }
.title { height: 30px; line-height: 30px; }
.inp { width: 400px; height: 30px; border: 1px solid #c4c4c4; line-height: 28px; }
.clabel { height: 34px; line-height: 16px; padding-top: 17px; }
.editor { height: 405px; border: 1px solid #b6b6b6; border-right: 0; box-shadow: 0 0 3px rgba(0,0,0,.15); }
.tb { height: 174px; border-bottom: 1px solid #b6b6b6; background: linear-gradient(#f5f5f5, #cfd1cf); box-shadow: inset 0 1px #fff; padding: 6px 0 0 8px; }
.tr { display: flex; gap: 6px; margin-bottom: 5px; }
.grp { height: 28px; border: 1px solid; border-color: #bcbcbc #a6a6a6 #979797; border-radius: 3px; background: linear-gradient(#fff, #e4e4e4); display: flex; color: #484848; box-shadow: 0 1px 0 rgba(255,255,255,.5); flex: none; }
.btn { width: 28px; height: 26px; padding: 5px 6px; display: flex; }
.btn svg { width: 16px; height: 16px; }
.btn.src { width: 69px; line-height: 17px; gap: 3px; padding-left: 5px; }
.btn.dd { width: 35px; }
.btn.dd::after, .combo::after { content: ""; border: 3px solid transparent; border-top-color: #444; border-bottom: 0; margin: 7px 0 0 1px; height: 3px; }
.btn.flip svg { transform: scaleX(-1); }
.btn.down { background: linear-gradient(#a8a8a8, #c2c2c2); box-shadow: inset 0 0 3px 1px rgba(0,0,0,.4); }
.grp s { width: 1px; height: 18px; margin: 4px 2px 0; background: #bfbfbf; }
.combo { width: 91px; padding: 0 6px 0 10px; line-height: 26px; justify-content: space-between; }
.combo::after { margin-top: 12px; }
.combo.small { width: 61px; }
.doc { height: 200px; overflow: hidden; padding: 20px 0 0 20px; font-size: 13px; line-height: 20px; white-space: nowrap; background: #fff; }
.doc p { margin: 0 0 13px; }
.caret::before { content: ""; float: left; width: 1px; height: 15px; margin: 2px -1px 0 0; background: #000; }
.pic { margin-top: 46px; }
.path { height: 29px; border-top: 1px solid #b6b6b6; background: linear-gradient(#ebebeb, #cfd1cf); font-weight: bold; font-size: 11px; line-height: 26px; color: #484848; padding-left: 12px; display: flex; gap: 10px; }
.submit { width: 123px; height: 29px; margin: 25px 0 0 201px; color: #fff; text-align: center; line-height: 27px; background: linear-gradient(#5c5c5c, #414141 50%, #2b2b2b 51%, #1f1f1f); border-top: 1px solid #222; border-bottom: 1px solid #222; box-shadow: inset 0 1px #8a8a8a, inset 0 -1px #777; }
.scroll { width: 15px; background: #f1f1f1; display: flex; flex-direction: column; align-items: center; padding: 6px 0 4px; }
.scroll i { border: 4px solid transparent; }
.scroll .up { border-top: 0; border-bottom-color: #999; }
.scroll .dn { border-bottom: 0; border-top-color: #444; margin-top: auto; }
.thumb { width: 11px; height: 672px; margin-top: 4px; background: #bcbcbc; border: 1px solid #a4a4a4; }

.k { fill: none; stroke: #111; }
.k2 { stroke: #333; stroke-width: 1.300px; }
.pix { font: bold 7.500px "Liberation Sans", sans-serif; fill: #222; }
.gl { font: bold 15px "Noto Sans", sans-serif; fill: #333; }
.it { font: italic bold 16px "Liberation Mono", monospace; }
.gi { font-style: italic; }
.wh { fill: #fff; }
```

FILE: app.js
```js
// Spread or tighten letters so each label fills its intended width.
document.querySelectorAll('[data-w]').forEach(function (el) {
  var range = document.createRange();
  range.selectNodeContents(el);
  var gap = Number(el.dataset.w) - range.getBoundingClientRect().width;
  el.style.letterSpacing = (gap / el.textContent.length) + 'px';
});
```
